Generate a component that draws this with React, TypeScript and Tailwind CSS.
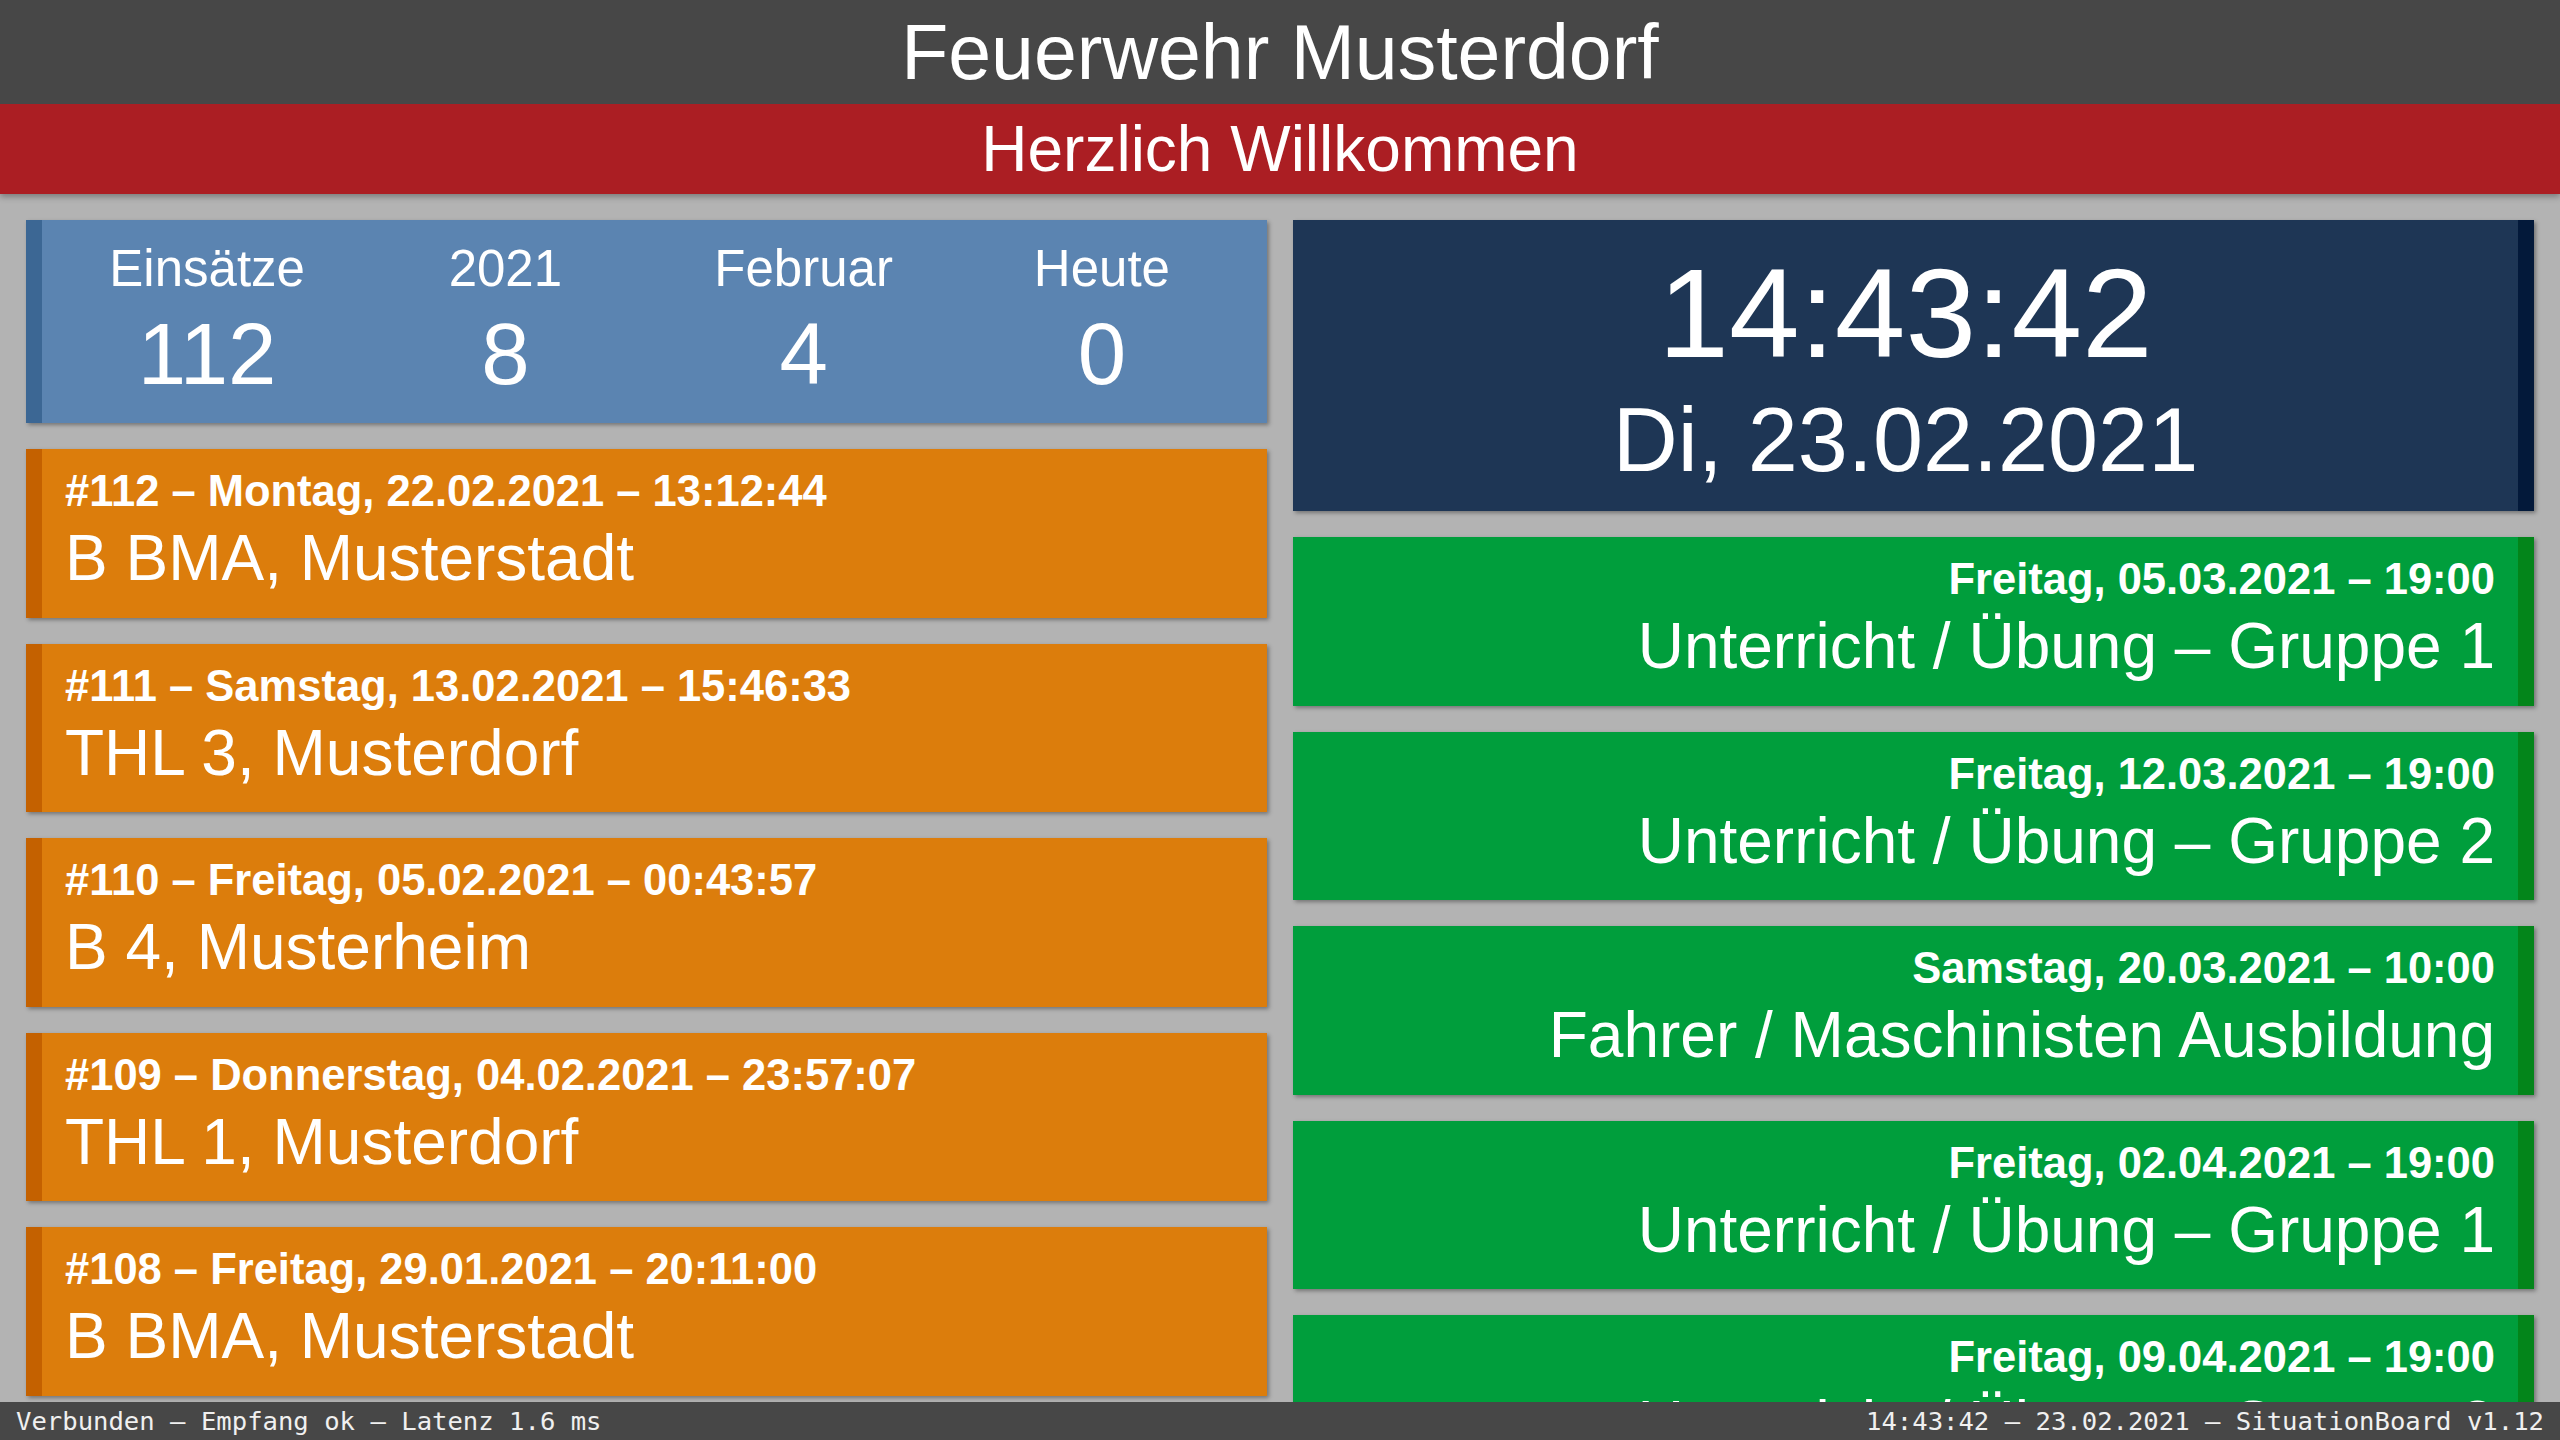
import React from "react";

const alarms = [
  { head: "#112 – Montag, 22.02.2021 – 13:12:44", text: "B BMA, Musterstadt" },
  { head: "#111 – Samstag, 13.02.2021 – 15:46:33", text: "THL 3, Musterdorf" },
  { head: "#110 – Freitag, 05.02.2021 – 00:43:57", text: "B 4, Musterheim" },
  { head: "#109 – Donnerstag, 04.02.2021 – 23:57:07", text: "THL 1, Musterdorf" },
  { head: "#108 – Freitag, 29.01.2021 – 20:11:00", text: "B BMA, Musterstadt" },
];

const events = [
  { head: "Freitag, 05.03.2021 – 19:00", text: "Unterricht / Übung – Gruppe 1" },
  { head: "Freitag, 12.03.2021 – 19:00", text: "Unterricht / Übung – Gruppe 2" },
  { head: "Samstag, 20.03.2021 – 10:00", text: "Fahrer / Maschinisten Ausbildung" },
  { head: "Freitag, 02.04.2021 – 19:00", text: "Unterricht / Übung – Gruppe 1" },
  { head: "Freitag, 09.04.2021 – 19:00", text: "Unterricht / Übung – Gruppe 2" },
];

const stats = [
  { label: "Einsätze", value: "112" },
  { label: "2021", value: "8" },
  { label: "Februar", value: "4" },
  { label: "Heute", value: "0" },
];

export default function App() {
  return (
    <div className="flex flex-col h-screen w-full overflow-hidden bg-[#b3b3b3] text-white leading-[normal] font-['Liberation_Sans',Arial,sans-serif]">
      <div className="relative z-10 shadow-[0_3px_6px_rgba(0,0,0,0.3)]">
        <div className="flex h-[104px] items-center justify-center bg-[#474747] text-[77px]">
          Feuerwehr Musterdorf
        </div>
        <div className="flex h-[90px] items-center justify-center bg-[#ab1e23] text-[64px]">
          Herzlich Willkommen
        </div>
      </div>

      <div className="flex-1 min-h-0 overflow-hidden grid grid-cols-2 gap-[26px] p-[26px] items-start">
        <div className="flex flex-col gap-[26px]">
          <div className="grid grid-cols-4 h-[203px] pt-[19px] px-[16px] border-l-[16px] border-[#3c6794] bg-[#5b84b1] shadow-[2px_2px_4px_rgba(0,0,0,0.35)]">
            {stats.map((s) => (
              <div key={s.label} className="flex flex-col items-center gap-[6px]">
                <div className="text-[51px]">{s.label}</div>
                <div className="text-[87px]">{s.value}</div>
              </div>
            ))}
          </div>
          {alarms.map((a) => (
            <div
              key={a.head}
              className="flex flex-col gap-[5px] h-[168.5px] pt-[18px] px-[23px] border-l-[16px] border-[#c46100] bg-[#dc7d0c] shadow-[2px_2px_4px_rgba(0,0,0,0.35)]"
            >
              <div className="text-[43.5px] font-bold whitespace-nowrap">{a.head}</div>
              <div className="text-[64px] whitespace-nowrap">{a.text}</div>
            </div>
          ))}
        </div>

        <div className="flex flex-col gap-[26px]">
          <div className="flex flex-col items-center gap-[3px] h-[291px] pt-[20px] border-r-[16px] border-[#03193a] bg-[#1e3655] shadow-[2px_2px_4px_rgba(0,0,0,0.35)]">
            <div className="text-[127px]">14:43:42</div>
            <div className="text-[90px]">Di, 23.02.2021</div>
          </div>
          {events.map((e, i) => (
            <div
              key={i}
              className="flex flex-col items-end gap-[5px] h-[168.5px] pt-[18px] px-[23px] border-r-[16px] border-[#03851a] bg-[#009e3c] shadow-[2px_2px_4px_rgba(0,0,0,0.35)]"
            >
              <div className="text-[43.5px] font-bold whitespace-nowrap">{e.head}</div>
              <div className="text-[64px] whitespace-nowrap">{e.text}</div>
            </div>
          ))}
        </div>
      </div>

      <div className="flex justify-between items-center px-4 py-1 bg-[#474747] text-[#f0f0f0] text-[25.6px] font-['DejaVu_Sans_Mono',monospace] whitespace-pre">
        <span>Verbunden — Empfang ok — Latenz 1.6 ms</span>
        <span>14:43:42 — 23.02.2021 — SituationBoard v1.12</span>
      </div>
    </div>
  );
}
